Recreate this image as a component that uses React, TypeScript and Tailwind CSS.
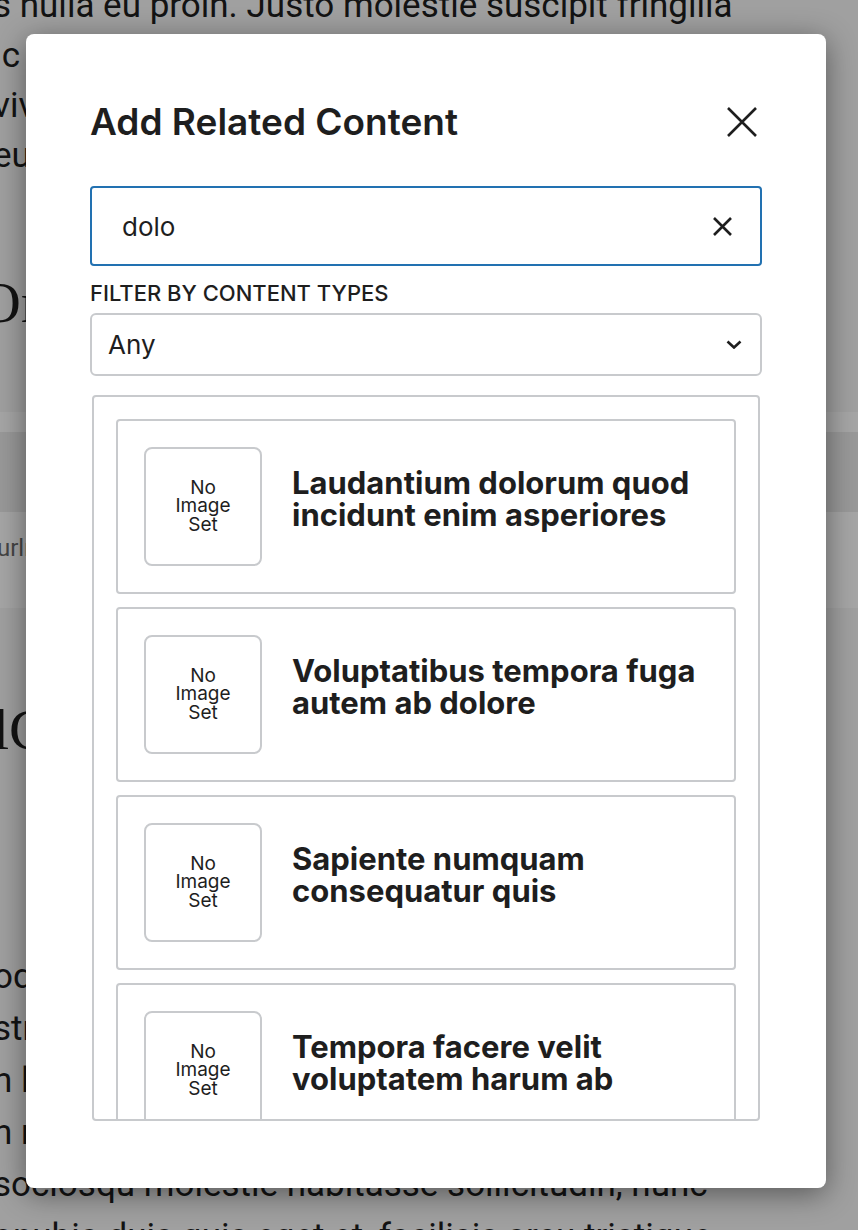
const results = [
  "Laudantium dolorum quod incidunt enim asperiores",
  "Voluptatibus tempora fuga autem ab dolore",
  "Sapiente numquam consequatur quis",
  "Tempora facere velit voluptatem harum ab",
];

function EditorBackdrop() {
  return (
    <div className="-ml-[7px] flex flex-col whitespace-nowrap font-['Roboto',sans-serif] text-[35px] text-[#1e1e1e]">
      <div className="-mt-[19px] leading-[50px]">
        <p>s nulla eu proin. Justo molestie suscipit fringilla</p>
        <p>&nbsp;c commodo vitae lorem ipsum dolor sit amet</p>
        <p>viverra nibh cras pulvinar mattis nunc sed</p>
        <p>eu augue ut lectus arcu bibendum at varius</p>
      </div>
      <h2 className="-ml-[14px] mt-[87px] h-[70px] font-['Liberation_Serif',serif] text-[58px] leading-[70px]">
        Or lorem ipsum
      </h2>
      <div className="mt-[74px] flex flex-col">
        <div className="h-[20px] bg-white" />
        <div className="h-[80px] bg-[#ececec]" />
        <div className="h-[96px] bg-white pl-[4px] pt-[16px] text-[24px] leading-[40px] text-[#6b6b6b]">
          urlna porttitor rhoncus dolor purus
        </div>
      </div>
      <h2 className="mt-[87px] h-[70px] font-['Liberation_Serif',serif] text-[58px] leading-[70px]">
        lCorem ipsum dolor
      </h2>
      <div className="mt-[186px] leading-[52px]">
        <p>odio ut enim blandit volutpat maecenas</p>
        <p>strum ornare massa eget egestas purus</p>
        <p>n lorem mollis aliquam ut porttitor leo</p>
        <p>n nisl tincidunt eget nullam non nisi</p>
        <p>sociosqu molestie habitasse sollicitudin, nunc</p>
        <p>onubia duis quis eget et, facilisis arcu tristique</p>
      </div>
    </div>
  );
}

function CloseIcon({ size, stroke }: { size: number; stroke: number }) {
  return (
    <svg width={size} height={size} viewBox={`0 0 ${size} ${size}`} fill="none" aria-hidden>
      <path
        d={`M1 1L${size - 1} ${size - 1}M${size - 1} 1L1 ${size - 1}`}
        stroke="#1e1e1e"
        strokeWidth={stroke}
      />
    </svg>
  );
}

function ResultItem({ title }: { title: string }) {
  return (
    <div className="flex h-[175px] shrink-0 items-start rounded-[4px] border-2 border-[#c8cacd] p-[26px]">
      <div className="flex h-[119px] w-[118px] shrink-0 items-center justify-center rounded-[8px] border-2 border-[#c8cacd] text-center text-[19px] leading-[18.5px] text-[#1e1e1e]">
        <span>
          No
          <br />
          Image
          <br />
          Set
        </span>
      </div>
      <h3 className="ml-[30px] mt-[20px] flex-1 text-[31px] font-bold leading-[32px] text-[#1e1e1e]">
        {title}
      </h3>
    </div>
  );
}

function RelatedContentModal() {
  return (
    <div className="absolute left-[26px] top-[34px] flex h-[1154px] w-[800px] flex-col rounded-[8px] bg-white px-[64px] pt-[66px] font-['Inter',sans-serif] text-[#1e1e1e] shadow-[0_6px_30px_rgba(0,0,0,0.45)]">
      <header className="flex h-[44px] items-center justify-between">
        <h1 className="text-[37px] font-semibold leading-[44px]">Add Related Content</h1>
        <button className="flex h-[40px] w-[40px] items-center justify-end pr-[5px]">
          <CloseIcon size={30} stroke={2.6} />
        </button>
      </header>

      <div className="mt-[42px] flex h-[80px] items-center rounded-[4px] border-2 border-[#2271b1] pl-[30px] pr-[28px]">
        <span className="flex-1 text-[26px]">dolo</span>
        <CloseIcon size={19} stroke={2.6} />
      </div>

      <label className="mt-[15px] text-[22px] font-medium uppercase leading-[24px]">
        Filter by content types
      </label>
      <div className="mt-[8px] flex h-[63px] items-center rounded-[6px] border-2 border-[#c8cacd] pl-[16px] pr-[18px]">
        <span className="flex-1 text-[26px]">Any</span>
        <svg width="16" height="9" viewBox="0 0 16 9" fill="none" aria-hidden>
          <path d="M1.5 1.5L8 7.5L14.5 1.5" stroke="#1e1e1e" strokeWidth="2.6" />
        </svg>
      </div>

      <div className="mx-[2px] mt-[19px] flex h-[726px] flex-col gap-[13px] overflow-hidden rounded-[4px] border-2 border-[#c8cacd] p-[22px]">
        {results.map((title) => (
          <ResultItem key={title} title={title} />
        ))}
      </div>
    </div>
  );
}

export default function App() {
  return (
    <div className="relative h-[1230px] w-[858px] overflow-hidden bg-[#f6f6f6]">
      <EditorBackdrop />
      <div className="absolute inset-0 bg-black/35" />
      <RelatedContentModal />
    </div>
  );
}
